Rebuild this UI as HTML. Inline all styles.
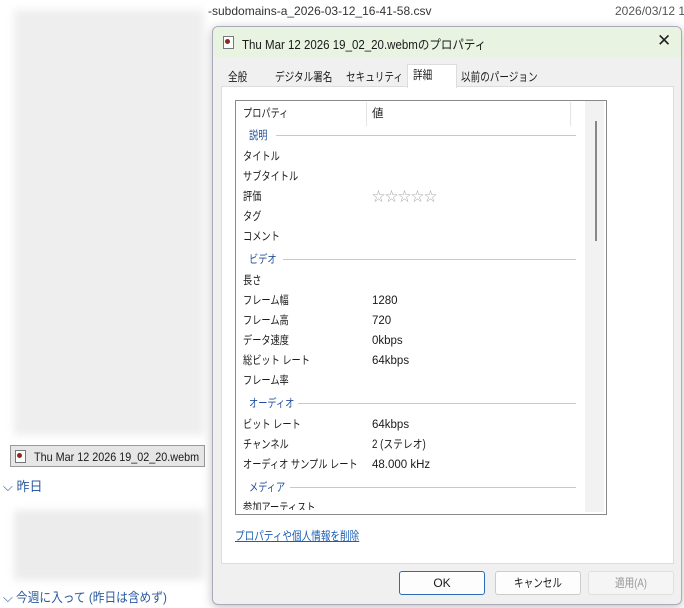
<!DOCTYPE html><html><head><meta charset="utf-8"><style>
body{margin:0;width:684px;height:608px;position:relative;overflow:hidden;background:#fff;font-family:"Liberation Sans","Noto Sans CJK JP",sans-serif;font-size:12px;color:#1a1a1a}
.a{position:absolute;white-space:nowrap}
.s{transform:scaleX(.8);transform-origin:0 0}
.blur{position:absolute;background:#ececec;filter:blur(4px)}
.r{position:absolute;left:243px;font-size:11.5px;line-height:14px;transform:scaleX(.8);transform-origin:0 0;white-space:nowrap}
.v{position:absolute;left:372px;font-size:11.5px;line-height:14px;white-space:nowrap}
.g{position:absolute;left:249px;color:#1f4e9c;font-size:11.5px;line-height:14px;transform:scaleX(.8);transform-origin:0 0}
.gl{position:absolute;height:1px;background:#c8c8d0}
</style></head><body>
<div class="blur" style="left:14px;top:10px;width:190px;height:425px;background:#eeeeee"></div>
<div class="blur" style="left:14px;top:510px;width:190px;height:70px"></div>
<div class="a" style="left:208px;top:4px;font-size:12px;color:#333">-subdomains-a_2026-03-12_16-41-58.csv</div>
<div class="a" style="left:615px;top:4px;color:#555">2026/03/12 16</div>
<div class="a" style="left:10px;top:445px;width:195px;height:22px;background:#e6e6e6;border:1px solid #999;box-sizing:border-box"></div>
<div class="a" style="left:15px;top:450px;width:9px;height:11px;border:1px solid #777;background:#fff"></div>
<div class="a" style="left:17px;top:453px;width:5px;height:5px;border-radius:50%;background:#8b2a1a"></div>
<div class="a s" style="left:34px;top:450px;font-size:12px;transform:scaleX(.9)">Thu Mar 12 2026 19_02_20.webm</div>
<div class="a" style="left:3px;top:476px;color:#2b5aa0;font-size:13px">⌵ 昨日</div>
<div class="a" style="left:3px;top:587px;color:#2b5aa0;font-size:13px">⌵ <span class="s" style="display:inline-block;transform:scaleX(.9)">今週に入って (昨日は含めず)</span></div>
<!-- dialog -->
<div class="a" style="left:212px;top:26px;width:468px;height:577px;background:#f0f0f0;border:1px solid #aab;border-radius:6px;box-shadow:0 2px 10px rgba(0,0,0,.25);overflow:hidden">
<div style="position:absolute;left:0;top:0;width:100%;height:30px;background:#e9f3e1"></div>
<div class="a" style="left:10px;top:9px;width:9px;height:11px;border:1px solid #777;background:#fff"></div>
<div class="a" style="left:12px;top:12px;width:5px;height:5px;border-radius:50%;background:#8b2a1a"></div>
<div class="a s" style="left:29px;top:7px;font-size:12.5px;transform:scaleX(.92)">Thu Mar 12 2026 19_02_20.webmのプロパティ</div>
<div class="a" style="left:444px;top:4px;font-size:17px;color:#222;font-weight:300">✕</div>
<div class="a" style="left:8px;top:59px;width:451px;height:476px;background:#fff;border:1px solid #ddd"></div>
<div class="a" style="left:194px;top:37px;width:48px;height:23px;background:#fff;border:1px solid #ddd;border-bottom:none"></div>
<div class="a s" style="left:15px;top:41px">全般</div>
<div class="a s" style="left:62px;top:41px">デジタル署名</div>
<div class="a s" style="left:133px;top:41px">セキュリティ</div>
<div class="a s" style="left:200px;top:39px">詳細</div>
<div class="a s" style="left:248px;top:41px">以前のパージョン</div>
<div class="a" style="left:22px;top:73px;width:370px;height:413px;border:1px solid #8a8a8a;background:#fff"></div>
<div class="a" style="left:372px;top:74px;width:19px;height:411px;background:#f2f2f2"></div>
<div class="a" style="left:382px;top:94px;width:2px;height:120px;background:#888"></div>
<div class="a" style="left:153px;top:75px;width:1px;height:24px;background:#e5e5e5"></div>
<div class="a" style="left:357px;top:75px;width:1px;height:24px;background:#e5e5e5"></div>
<a class="a s" style="left:22px;top:500px;color:#1a5fb4;text-decoration:underline;font-size:12px">プロパティや個人情報を削除</a>
<div class="a" style="left:186px;top:544px;width:84px;height:22px;border:1px solid #2a6db5;background:#fdfdfd;border-radius:3px;text-align:center;line-height:22px">OK</div>
<div class="a" style="left:282px;top:544px;width:84px;height:22px;border:1px solid #ccc;background:#fdfdfd;border-radius:3px;text-align:center;line-height:22px"><span class="s" style="display:inline-block;transform-origin:50% 0">キャンセル</span></div>
<div class="a" style="left:375px;top:544px;width:84px;height:22px;border:1px solid #e0e0e0;background:#f5f5f5;border-radius:3px;text-align:center;line-height:22px;color:#999"><span class="s" style="display:inline-block;transform-origin:50% 0">適用(A)</span></div>
</div>
<div class="r" style="top:107px">プロパティ</div><div class="v" style="top:107px">値</div>
<div class="g" style="top:129px">説明</div><div class="gl" style="left:276px;top:135px;width:300px"></div>
<div class="r" style="top:150px">タイトル</div>
<div class="r" style="top:170px">サブタイトル</div>
<div class="r" style="top:190px">評価</div><div class="v" style="top:190px;color:#aaa;font-size:13px;letter-spacing:0">☆☆☆☆☆</div>
<div class="r" style="top:210px">タグ</div>
<div class="r" style="top:230px">コメント</div>
<div class="g" style="top:253px">ビデオ</div><div class="gl" style="left:283px;top:259px;width:293px"></div>
<div class="r" style="top:274px">長さ</div>
<div class="r" style="top:294px">フレーム幅</div><div class="v" style="top:294px">1280</div>
<div class="r" style="top:314px">フレーム高</div><div class="v" style="top:314px">720</div>
<div class="r" style="top:334px">データ速度</div><div class="v" style="top:334px">0kbps</div>
<div class="r" style="top:354px">総ビット レート</div><div class="v" style="top:354px">64kbps</div>
<div class="r" style="top:374px">フレーム率</div>
<div class="g" style="top:397px">オーディオ</div><div class="gl" style="left:298px;top:403px;width:278px"></div>
<div class="r" style="top:418px">ビット レート</div><div class="v" style="top:418px">64kbps</div>
<div class="r" style="top:438px">チャンネル</div><div class="v" style="top:438px"><span class="s" style="display:inline-block;transform:scaleX(.85)">2 (ステレオ)</span></div>
<div class="r" style="top:458px">オーディオ サンプル レート</div><div class="v" style="top:458px">48.000 kHz</div>
<div class="g" style="top:481px">メディア</div><div class="gl" style="left:290px;top:487px;width:286px"></div>
<div class="a" style="left:236px;top:498px;width:353px;height:12px;overflow:hidden"><div class="r" style="left:7px;top:3px">参加アーティスト</div></div>
</body></html>
